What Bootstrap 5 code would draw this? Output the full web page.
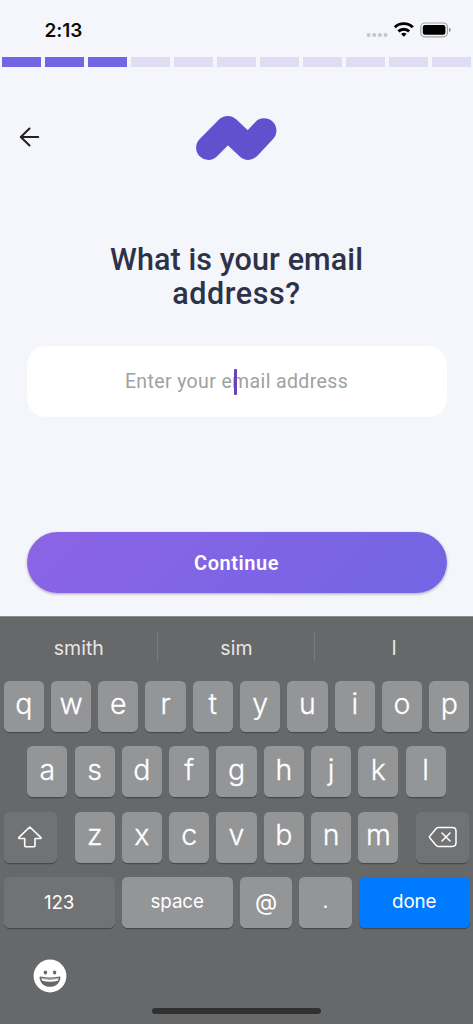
<!DOCTYPE html>
<html lang="en">
<head>
<meta charset="utf-8">
<meta name="viewport" content="width=device-width, initial-scale=1">
<title>Email address</title>
<link href="https://cdn.jsdelivr.net/npm/bootstrap@5.3.0/dist/css/bootstrap.min.css" rel="stylesheet">
<style>
  body { background: #f4f6fb; font-family: Roboto, "Liberation Sans", sans-serif; color: #2e3248; }
  .screen { width: 473px; height: 1024px; }
  .status { height: 56.7px; padding: 3px 19px 0 44.5px; color: #0b0b0b; }
  .clock { font: 600 19px/1 Inter, sans-serif; letter-spacing: -.1px; padding-top: 2px; }
  .steps { gap: 4.4px; padding: 0 2.3px; height: 10.2px; }
  .step { background: #e0dcf4; }
  .step.done { background: #7265e3; }
  .topbar { height: 140.6px; display: grid; grid-template-columns: 1fr auto 1fr; padding: 0 18px 0 17.5px; }
  .logo { margin-top: 1.5px; }
  .heading { font-size: 30.5px; line-height: 34px; font-weight: 500; letter-spacing: .1px; margin-top: 36px; }
  .heading .wide { letter-spacing: .55px; }
  .field { height: 71.5px; margin: 34.3px 26.5px 0; border-radius: 19px; background: #fff; }
  .hint { font-size: 19.5px; color: #a1a1a1; letter-spacing: .37px; }
  .caret { width: 2.6px; height: 26px; background: #6c40b8; border-radius: 1px; left: 207.5px; top: 23px; }
  .cta { height: 61px; margin: 115.2px 26.5px 0; border: 0; color: #fff; font-size: 20px; font-weight: 600; letter-spacing: .55px; line-height: 1; padding-top: 1px;
    background: linear-gradient(135deg, #8c64e6, #7265e3); box-shadow: 0 1px 3px rgba(0,0,0,.32); }
  .keyboard { background: #67686a; border-top: 1px solid #8b8c8e; height: 408px; color: #fff; font-family: Inter, sans-serif; }
  .suggest { height: 63.5px; font-size: 19.5px; color: #e6e6e6; padding-bottom: 1px; }
  .suggest > div { letter-spacing: .05px; }
  .suggest div + div::before { content: ""; position: absolute; left: -1px; top: 15px; width: 1px; height: 30px; background: #7a7b7d; }
  .keys { gap: 7.1px; padding: 0 3.6px; height: 51px; margin-bottom: 14.5px; }
  .key { width: 40.2px; flex: none; background: #949597; border-radius: 5.5px; box-shadow: 0 1.2px 0 #48494b; font-size: 28.5px; font-weight: 300; -webkit-text-stroke: .3px #fff; line-height: 1; padding-bottom: 3px; }
  .key.dim { background: #717274; padding-bottom: 0; }
  .key.word { font-size: 18.8px; font-weight: 400; padding-bottom: 1px; letter-spacing: -.1px; -webkit-text-stroke: 0; }
  .key.dim.word { padding-top: 2px; padding-bottom: 0; }
  .key.at-sign { font-size: 23px; }
  .w-mod { width: 53.4px; }
  .w-sm { width: 52.4px; }
  .w-lg { width: 111px; }
  .key.go { background: #007aff; }
  .emoji { margin: 16px 0 0 33px; }
  .homebar { width: 169px; height: 6px; border-radius: 3px; background: #303030; margin-bottom: 10px; }
</style>
</head>
<body>
<div class="screen d-flex flex-column overflow-hidden">
  <header class="status d-flex align-items-center justify-content-between">
    <span class="clock">2:13</span>
    <svg width="88" height="20" viewBox="366 20 88 20">
      <g fill="#c6c7cb"><circle cx="368.6" cy="35" r="2"/><circle cx="374.2" cy="35" r="2"/><circle cx="379.9" cy="35" r="2"/><circle cx="385.5" cy="35" r="2"/></g>
      <g fill="none" stroke="#000" stroke-width="2.9"><path d="M394.8 27.3a12.8 12.8 0 0 1 18 0"/><path d="M398.4 31.4a7.7 7.7 0 0 1 10.8 0"/></g>
      <path d="M401.1 34.1a3.8 3.8 0 0 1 5.4 0l-2.7 2.7z" fill="#000"/>
      <rect x="420.8" y="23" width="26.6" height="13.8" rx="4" fill="none" stroke="#a1a2a5" stroke-width="1.2"/>
      <rect x="422.8" y="25" width="22.6" height="9.8" rx="2.2" fill="#000"/>
      <path d="M449 27.8c2.4.8 2.4 3.4 0 4.2z" fill="#8d8e91"/>
    </svg>
  </header>
  <div class="steps d-flex">
    <div class="step done flex-fill"></div><div class="step done flex-fill"></div><div class="step done flex-fill"></div>
    <div class="step flex-fill"></div><div class="step flex-fill"></div><div class="step flex-fill"></div><div class="step flex-fill"></div>
    <div class="step flex-fill"></div><div class="step flex-fill"></div><div class="step flex-fill"></div><div class="step flex-fill"></div>
  </div>
  <nav class="topbar align-items-center">
    <svg width="24" height="24" viewBox="18 125 24 24" fill="none" stroke="#222" stroke-width="2.1" stroke-linecap="round" stroke-linejoin="round"><path d="M38.2 137H20.8M29.5 128.6L20.8 137l8.7 8.5"/></svg>
    <svg class="logo" width="82" height="46" viewBox="195.2 115 82 46" fill="none" stroke="#6151cf" stroke-width="24.6" stroke-linecap="round" stroke-linejoin="round"><path d="M208.6 147.6L227.9 128.2L248.4 147.6L264.3 130.6"/></svg>
  </nav>
  <h1 class="heading text-center mb-0">What is your email<br><span class="wide">address?</span></h1>
  <div class="field position-relative d-flex align-items-center justify-content-center">
    <span class="hint">Enter your email address</span>
    <span class="caret position-absolute"></span>
  </div>
  <button class="cta btn rounded-pill px-0 pb-0">Continue</button>

  <section class="keyboard mt-auto d-flex flex-column">
    <div class="suggest d-flex text-center align-items-center">
      <div class="col-4">smith</div>
      <div class="col-4 position-relative h-100 d-flex align-items-center justify-content-center">sim</div>
      <div class="col-4 position-relative h-100 d-flex align-items-center justify-content-center">I</div>
    </div>
    <div class="keys d-flex justify-content-center">
      <div class="key d-flex align-items-center justify-content-center">q</div>
      <div class="key d-flex align-items-center justify-content-center">w</div>
      <div class="key d-flex align-items-center justify-content-center">e</div>
      <div class="key d-flex align-items-center justify-content-center">r</div>
      <div class="key d-flex align-items-center justify-content-center">t</div>
      <div class="key d-flex align-items-center justify-content-center">y</div>
      <div class="key d-flex align-items-center justify-content-center">u</div>
      <div class="key d-flex align-items-center justify-content-center">i</div>
      <div class="key d-flex align-items-center justify-content-center">o</div>
      <div class="key d-flex align-items-center justify-content-center">p</div>
    </div>
    <div class="keys d-flex justify-content-center">
      <div class="key d-flex align-items-center justify-content-center">a</div>
      <div class="key d-flex align-items-center justify-content-center">s</div>
      <div class="key d-flex align-items-center justify-content-center">d</div>
      <div class="key d-flex align-items-center justify-content-center">f</div>
      <div class="key d-flex align-items-center justify-content-center">g</div>
      <div class="key d-flex align-items-center justify-content-center">h</div>
      <div class="key d-flex align-items-center justify-content-center">j</div>
      <div class="key d-flex align-items-center justify-content-center">k</div>
      <div class="key d-flex align-items-center justify-content-center">l</div>
    </div>
    <div class="keys d-flex">
      <div class="key dim w-mod me-auto d-flex align-items-center justify-content-center">
        <svg width="26" height="24" viewBox="0 0 26 24" fill="none" stroke="#fff" stroke-width="1.6" stroke-linejoin="round"><path d="M12.8 2L24 12.7q.3.8-.6.8H18v7.3q0 1-1 1H8.7q-1 0-1-1v-7.3H2.3q-.9 0-.6-.8z"/></svg>
      </div>
      <div class="key d-flex align-items-center justify-content-center">z</div>
      <div class="key d-flex align-items-center justify-content-center">x</div>
      <div class="key d-flex align-items-center justify-content-center">c</div>
      <div class="key d-flex align-items-center justify-content-center">v</div>
      <div class="key d-flex align-items-center justify-content-center">b</div>
      <div class="key d-flex align-items-center justify-content-center">n</div>
      <div class="key d-flex align-items-center justify-content-center">m</div>
      <div class="key dim w-mod ms-auto d-flex align-items-center justify-content-center">
        <svg width="30" height="22" viewBox="0 0 30 22" fill="none" stroke="#fff" stroke-width="1.5" stroke-linecap="round" stroke-linejoin="round"><path d="M10.2 1.6h14.2q3.6 0 3.6 3.6v11.6q0 3.6-3.6 3.6H10.2q-1.2 0-2-1L1.9 12.1q-1-1.1 0-2.2L8.2 2.6q.8-1 2-1zM14 7l8 8M22 7l-8 8"/></svg>
      </div>
    </div>
    <div class="keys d-flex">
      <div class="key dim word w-lg d-flex align-items-center justify-content-center">123</div>
      <div class="key word w-lg d-flex align-items-center justify-content-center">space</div>
      <div class="key word at-sign w-sm d-flex align-items-center justify-content-center">@</div>
      <div class="key word w-sm d-flex align-items-center justify-content-center">.</div>
      <div class="key word go w-lg d-flex align-items-center justify-content-center">done</div>
    </div>
    <div class="flex-grow-1 d-flex flex-column justify-content-between">
      <svg class="emoji" width="34" height="34" viewBox="0 0 34 34">
        <circle cx="17" cy="17" r="16.4" fill="#fff"/>
        <g fill="#67686a"><ellipse cx="12.4" cy="13.4" rx="1.7" ry="2"/><ellipse cx="21.6" cy="13.4" rx="1.7" ry="2"/>
        <path d="M6.5 18.5q-.1-1 .9-.9 9.6 1.7 19.2 0 1-.1.9.9C26.7 24.8 22.5 27.8 17 27.8S7.3 24.8 6.5 18.5z"/></g>
        <path d="M8 18.8q9 1.7 18 0-.5 2.1-1.3 3-7.7 2-15.4 0-.8-.9-1.3-3z" fill="#fff"/>
        <path d="M8 19.500q9 1.700 18 0" fill="none" stroke="#67686a" stroke-width=".6"/>
      </svg>
      <div class="homebar mx-auto"></div>
    </div>
  </section>
</div>
<script src="https://cdn.jsdelivr.net/npm/bootstrap@5.3.0/dist/js/bootstrap.bundle.min.js"></script>
</body>
</html>
